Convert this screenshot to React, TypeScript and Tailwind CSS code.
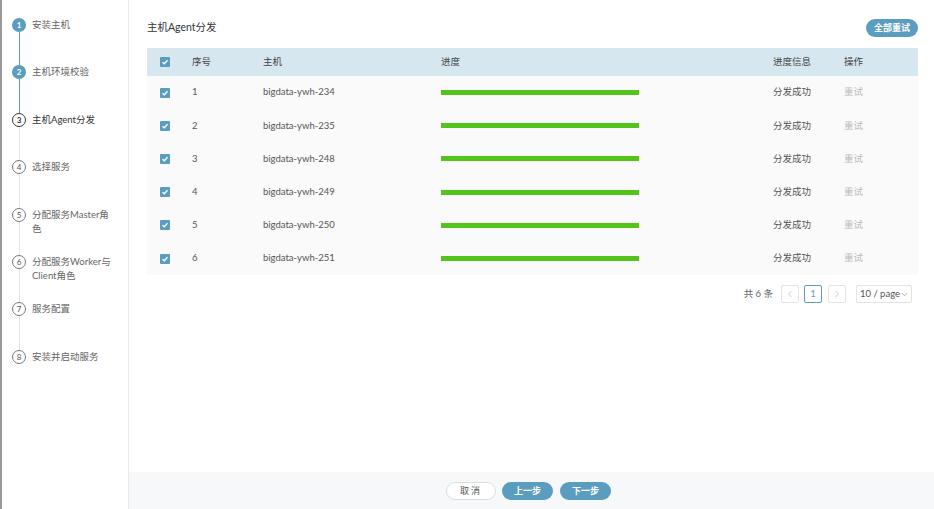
import React from 'react';

const steps = [
  { label: '安装主机', state: 'done' },
  { label: '主机环境校验', state: 'done' },
  { label: '主机Agent分发', state: 'current' },
  { label: '选择服务', state: 'todo' },
  { label: '分配服务Master角色', state: 'todo' },
  { label: '分配服务Worker与Client角色', state: 'todo' },
  { label: '服务配置', state: 'todo' },
  { label: '安装并启动服务', state: 'todo' },
];

const rows = [
  { id: 1, host: 'bigdata-ywh-234' },
  { id: 2, host: 'bigdata-ywh-235' },
  { id: 3, host: 'bigdata-ywh-248' },
  { id: 4, host: 'bigdata-ywh-249' },
  { id: 5, host: 'bigdata-ywh-250' },
  { id: 6, host: 'bigdata-ywh-251' },
];

const Check: React.FC = () => (
  <span className="flex h-[10px] w-[10px] items-center justify-center rounded-[1px] bg-[#5b9dbf]">
    <svg width="8" height="8" viewBox="0 0 8 8">
      <path d="M1.5 4.2 L3.3 5.8 L6.5 2.3" fill="none" stroke="white" strokeWidth="1.3" />
    </svg>
  </span>
);

const StepCircle: React.FC<{ n: number; state: string }> = ({ n, state }) => {
  if (state === 'done')
    return (
      <span className="flex h-[14px] w-[14px] shrink-0 items-center justify-center rounded-full bg-[#5b9dbf] text-[8px] font-bold text-white">
        {n}
      </span>
    );
  if (state === 'current')
    return (
      <span className="flex h-[14px] w-[14px] shrink-0 items-center justify-center rounded-full border-[1.5px] border-[#333] bg-white text-[8px] font-bold text-[#333]">
        {n}
      </span>
    );
  return (
    <span className="flex h-[14px] w-[14px] shrink-0 items-center justify-center rounded-full border border-[#777] bg-white text-[8px] text-[#555]">
      {n}
    </span>
  );
};

const App: React.FC = () => {
  return (
    <div
      className="flex h-[509px] w-[934px] overflow-hidden bg-white text-[#555]"
      style={{ fontFamily: 'Lato, "Noto Sans CJK SC", sans-serif' }}
    >
      {/* Sidebar steps */}
      <div className="w-[129px] shrink-0 border-l-2 border-r border-l-[#999] border-r-[#e8e8e8] pt-[18px]">
        {steps.map((s, i) => (
          <div key={s.label} className="flex h-[47.4px] pl-[10px]">
            <div className="flex w-[14px] flex-col items-center">
              <StepCircle n={i + 1} state={s.state} />
              {i < steps.length - 1 && (
                <span
                  className={`w-px flex-1 ${i < 2 ? 'bg-[#5b9dbf]' : 'bg-[#e4e4e4]'}`}
                />
              )}
            </div>
            <div
              className={`ml-[6px] w-[80px] text-[9.5px] leading-[14px] ${
                s.state === 'current' ? 'text-[#333]' : 'text-[#666]'
              }`}
            >
              {s.label}
            </div>
          </div>
        ))}
      </div>

      {/* Main */}
      <div className="flex flex-1 flex-col">
        <div className="flex-1 pl-[18px] pr-[16px] pt-[19px]">
          <div className="flex h-[18px] items-center justify-between">
            <span className="text-[10.5px] text-[#333]">主机Agent分发</span>
            <button className="h-[18px] w-[52px] rounded-full bg-[#5b9dbf] text-[9px] font-bold text-white">
              全部重试
            </button>
          </div>

          <div className="mt-[11px] text-[9.5px]">
            <div className="flex h-[28px] items-center bg-[#d7e7ef] text-[#444]">
              <div className="w-[45px] pl-[13px]">
                <Check />
              </div>
              <div className="w-[71px]">序号</div>
              <div className="w-[178px]">主机</div>
              <div className="w-[332px]">进度</div>
              <div className="w-[71px]">进度信息</div>
              <div>操作</div>
            </div>
            {rows.map((r) => (
              <div key={r.id} className="flex h-[33.2px] items-center bg-[#fafafa] text-[#555]">
                <div className="w-[45px] pl-[13px]">
                  <Check />
                </div>
                <div className="w-[71px]">{r.id}</div>
                <div className="w-[178px]">{r.host}</div>
                <div className="w-[332px]">
                  <div className="h-[5px] w-[198px] bg-[#52c41a]" />
                </div>
                <div className="w-[71px]">分发成功</div>
                <div className="text-[#bbb]">重试</div>
              </div>
            ))}
          </div>

          <div className="mt-[10px] flex items-center justify-end pr-[6px] text-[9.5px]">
            <span className="mr-[8px] text-[#666]">共 6 条</span>
            <span className="flex h-[18px] w-[18px] items-center justify-center rounded-[2px] border border-[#e3e3e3] text-[#ccc]">
              <svg width="6" height="8" viewBox="0 0 6 8">
                <path d="M4.5 1 L1.5 4 L4.5 7" fill="none" stroke="#c8c8c8" strokeWidth="0.9" />
              </svg>
            </span>
            <span className="ml-[5px] flex h-[18px] w-[18px] items-center justify-center rounded-[2px] border border-[#5b9dbf] text-[#5b9dbf]">
              1
            </span>
            <span className="ml-[6px] flex h-[18px] w-[18px] items-center justify-center rounded-[2px] border border-[#e3e3e3]">
              <svg width="6" height="8" viewBox="0 0 6 8">
                <path d="M1.5 1 L4.5 4 L1.5 7" fill="none" stroke="#c8c8c8" strokeWidth="0.9" />
              </svg>
            </span>
            <span className="ml-[10px] flex h-[18px] w-[56px] items-center justify-center rounded-[2px] border border-[#e3e3e3] text-[#555]">
              10 / page
              <svg width="7" height="5" viewBox="0 0 7 5" className="ml-[1px]">
                <path d="M0.8 1 L3.5 3.8 L6.2 1" fill="none" stroke="#aaa" strokeWidth="0.8" />
              </svg>
            </span>
          </div>
        </div>

        {/* Footer */}
        <div className="flex h-[37px] items-center justify-center gap-[6px] bg-[#f7f8fa] pr-[6px]">
          <button className="h-[18px] w-[50px] rounded-full border border-[#ddd] bg-white text-[9px] tracking-[2px] text-[#555]">
            取消
          </button>
          <button className="h-[18px] w-[51px] rounded-full bg-[#5b9dbf] text-[9px] font-bold text-white">
            上一步
          </button>
          <button className="ml-[1px] h-[18px] w-[51px] rounded-full bg-[#5b9dbf] text-[9px] font-bold text-white">
            下一步
          </button>
        </div>
      </div>
    </div>
  );
};

export default App;
